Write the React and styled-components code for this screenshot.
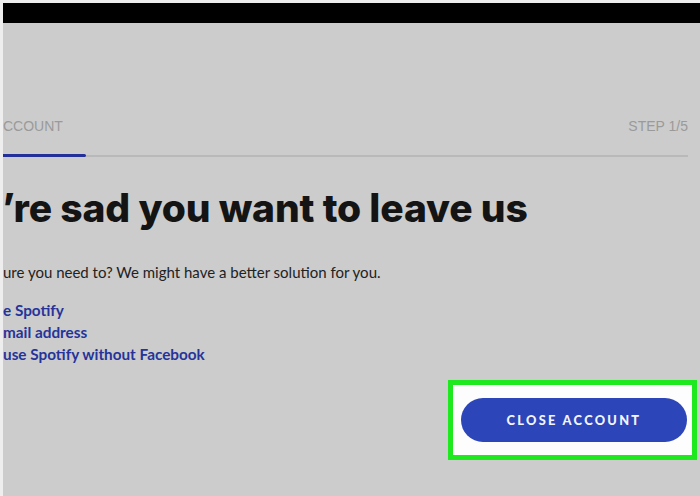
import React from "react"
import styled, { createGlobalStyle } from "styled-components"

const Global = createGlobalStyle`
  html, body {
    margin: 0;
    padding: 0;
    background: #eeeeee;
  }
  body {
    font-family: "Lato", "Liberation Sans", sans-serif;
    overflow: hidden;
  }
`

const Screen = styled.div`
  width: 697px;
  height: 493px;
  margin: 3px 0 0 3px;
  background: #cccccc;
  display: flex;
  flex-direction: column;
  overflow: hidden;
`

const TopBar = styled.div`
  height: 20px;
  background: #000;
  flex-shrink: 0;
`

const Content = styled.div`
  display: flex;
  flex-direction: column;
  padding-right: 12px;
`

const TabRow = styled.div`
  display: flex;
  justify-content: space-between;
  margin-top: 93px;
  font-size: 14px;
  line-height: 20px;
  color: #9a9a9a;
  font-family: "Liberation Sans", Arial, sans-serif;
`

const Track = styled.div`
  margin-top: 18px;
  height: 3px;
  display: flex;
  align-items: center;
`

const TrackFill = styled.div`
  height: 3px;
  background: #23309a;
  border-radius: 0 2px 2px 0;
`

const TrackRest = styled.div`
  flex: 1;
  height: 2px;
  background: #b9b9b9;
`

const Heading = styled.h1`
  margin: 27px 0 0 -1px;
  font-family: "Inter", sans-serif;
  font-weight: 800;
  font-size: 39px;
  line-height: 48px;
  letter-spacing: -0.15px;
  color: #141414;
  white-space: nowrap;
`

const Lead = styled.p`
  margin: 29px 0 0;
  font-family: "Lato", sans-serif;
  font-size: 15px;
  line-height: 22px;
  color: #222;
  white-space: nowrap;
`

const Links = styled.div`
  margin-top: 16px;
  display: flex;
  flex-direction: column;
`

const Help = styled.a`
  font-family: "Lato", sans-serif;
  font-weight: 700;
  font-size: 15.3px;
  line-height: 22px;
  color: #25349a;
  text-decoration: none;
  white-space: nowrap;
`

const Actions = styled.div`
  margin-top: 15px;
  display: flex;
  justify-content: flex-end;
  margin-right: -9px;
`

const Highlight = styled.div`
  height: 70px;
  width: 234px;
  border: 5px solid #1ee81e;
  background: #fdfdfd;
  display: flex;
  align-items: center;
  justify-content: flex-end;
  padding-right: 5px;
`

const CloseButton = styled.button`
  width: 226px;
  height: 44px;
  border: none;
  border-radius: 22px;
  background: #2c45b8;
  color: #f2f4ff;
  font-family: "Lato", sans-serif;
  font-weight: 900;
  font-size: 12.8px;
  letter-spacing: 2.3px;
  cursor: pointer;
`

export default function App() {
  return (
    <>
      <Global />
      <Screen>
        <TopBar />
        <Content>
          <TabRow>
            <span>CCOUNT</span>
            <span>STEP 1/5</span>
          </TabRow>
          <Track>
            <TrackFill style={{ width: 83 }} />
            <TrackRest />
          </Track>
          <Heading>’re sad you want to leave us</Heading>
          <Lead>ure you need to? We might have a better solution for you.</Lead>
          <Links>
            <Help href="#">e Spotify</Help>
            <Help href="#">mail address</Help>
            <Help href="#">use Spotify without Facebook</Help>
          </Links>
          <Actions>
            <Highlight>
              <CloseButton>CLOSE ACCOUNT</CloseButton>
            </Highlight>
          </Actions>
        </Content>
      </Screen>
    </>
  )
}
